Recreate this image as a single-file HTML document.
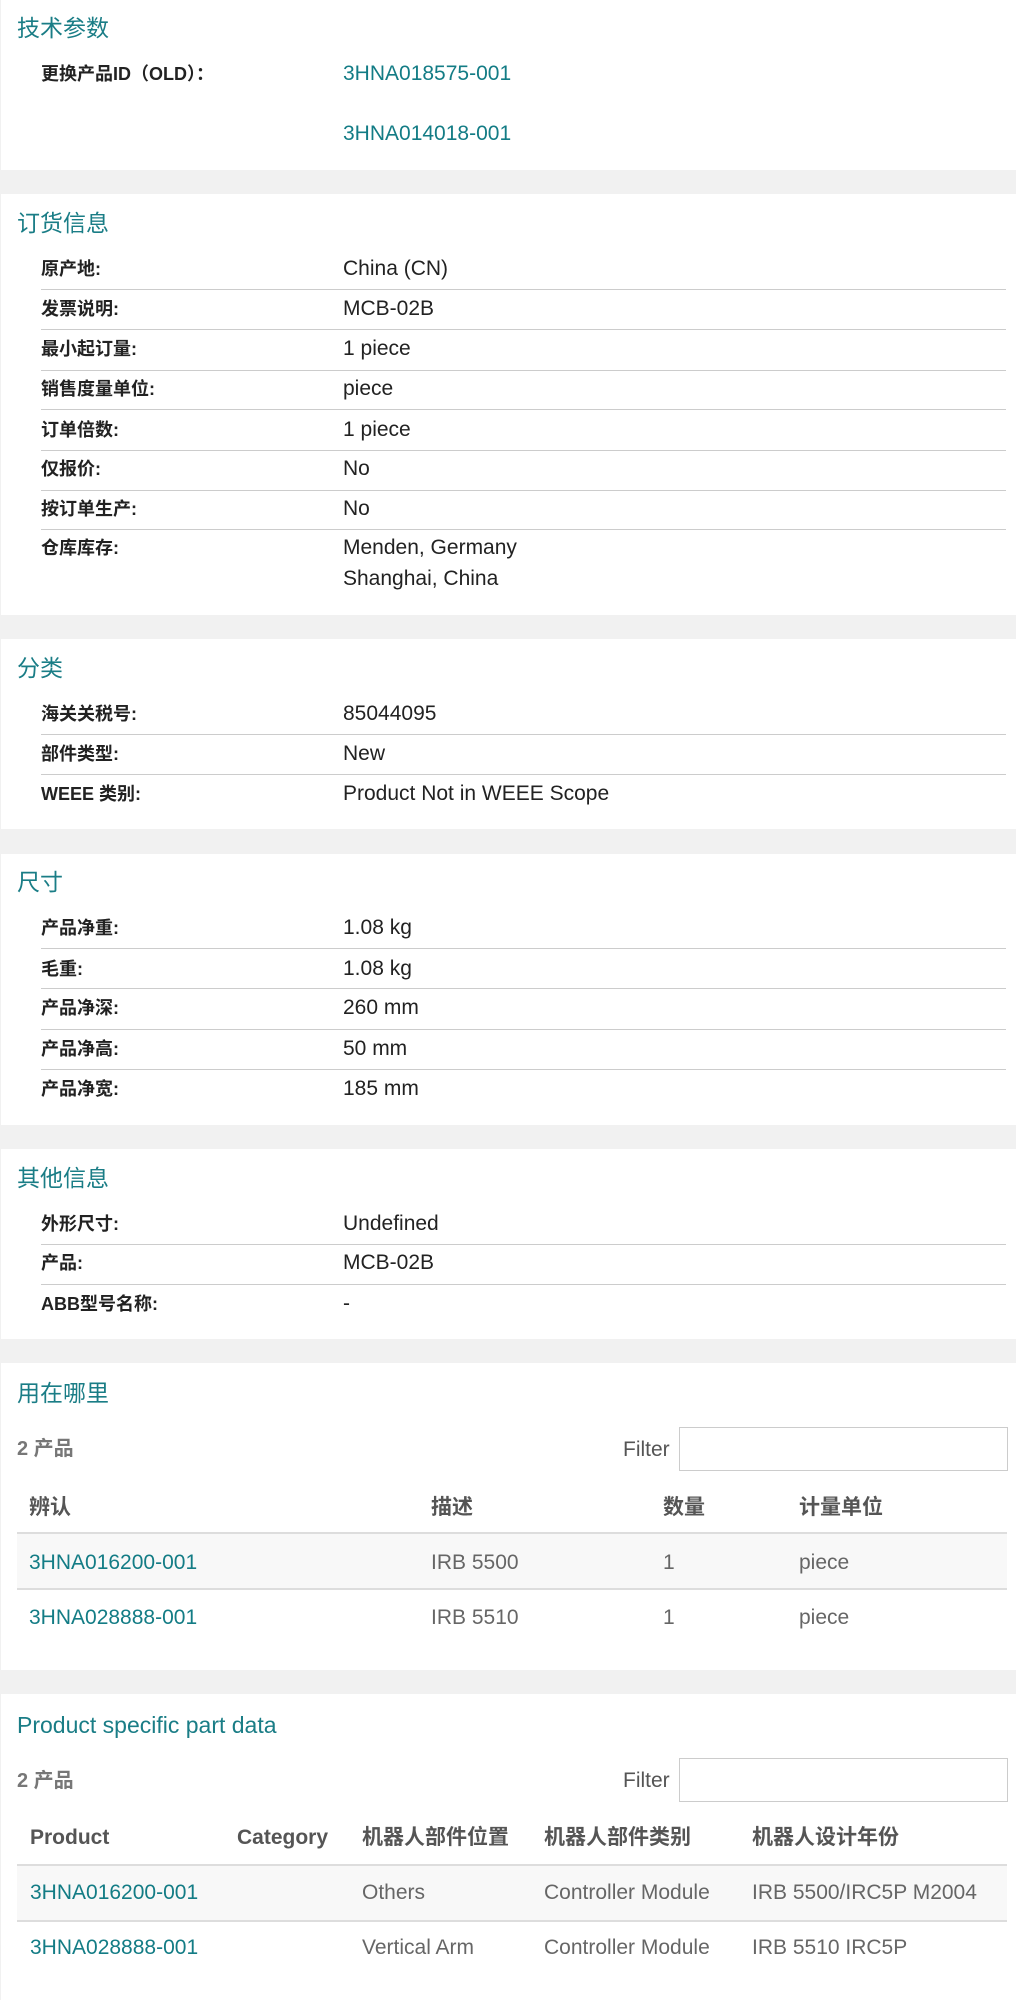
<!DOCTYPE html>
<html><head><meta charset="utf-8"><style>
*{margin:0;padding:0;box-sizing:border-box}
body{width:1016px;height:2000px;background:#f1f1f1;position:relative;overflow:hidden;font-family:"Liberation Sans","Noto Sans CJK SC",sans-serif}
.card{position:absolute;left:1px;right:0;background:#fff}
.t{position:absolute;left:16px;font-size:23px;color:#1a7d86;line-height:30px;white-space:nowrap}
.l{position:absolute;left:40px;font-size:18px;font-weight:bold;color:#222;line-height:24px;white-space:nowrap}
.v{position:absolute;left:342px;font-size:21px;color:#222;line-height:24px;white-space:nowrap}
.hr{position:absolute;left:40px;right:10px;height:1px;background:#ccc}
.c{position:absolute;font-size:21px;color:#666;line-height:24px;white-space:nowrap}
.h{position:absolute;font-size:21px;font-weight:bold;color:#555;line-height:24px;white-space:nowrap}
.a{color:#137c85}
.tl{position:absolute;left:16px;right:9px;height:2px;background:#ddd}
.bg{position:absolute;left:16px;right:9px;background:#f8f8f8}
.fb{position:absolute;left:678px;width:329px;height:44px;border:1px solid #ccc;background:#fff}
</style></head><body>
<div class="card" style="top:0;height:170px">
<div class="t" style="top:13px">技术参数</div>
<div class="l" style="top:62px">更换产品ID（OLD）：</div>
<div class="v a" style="top:62px">3HNA018575-001</div>
<div class="v a" style="top:122px">3HNA014018-001</div>
</div>
<div class="card" style="top:194px;height:421px">
<div class="t" style="top:14px">订货信息</div>
<div class="l" style="top:63px">原产地:</div><div class="v" style="top:63px">China (CN)</div>
<div class="hr" style="top:95px"></div>
<div class="l" style="top:103px">发票说明:</div><div class="v" style="top:103px">MCB-02B</div>
<div class="hr" style="top:135px"></div>
<div class="l" style="top:143px">最小起订量:</div><div class="v" style="top:143px">1 piece</div>
<div class="hr" style="top:176px"></div>
<div class="l" style="top:183px">销售度量单位:</div><div class="v" style="top:183px">piece</div>
<div class="hr" style="top:215px"></div>
<div class="l" style="top:224px">订单倍数:</div><div class="v" style="top:224px">1 piece</div>
<div class="hr" style="top:256px"></div>
<div class="l" style="top:263px">仅报价:</div><div class="v" style="top:263px">No</div>
<div class="hr" style="top:296px"></div>
<div class="l" style="top:303px">按订单生产:</div><div class="v" style="top:303px">No</div>
<div class="hr" style="top:335px"></div>
<div class="l" style="top:342px">仓库库存:</div><div class="v" style="top:342px">Menden, Germany</div>
<div class="v" style="top:373px">Shanghai, China</div>
</div>
<div class="card" style="top:639px;height:190px">
<div class="t" style="top:14px">分类</div>
<div class="l" style="top:63px">海关关税号:</div><div class="v" style="top:63px">85044095</div>
<div class="hr" style="top:95px"></div>
<div class="l" style="top:103px">部件类型:</div><div class="v" style="top:103px">New</div>
<div class="hr" style="top:135px"></div>
<div class="l" style="top:143px">WEEE 类别:</div><div class="v" style="top:143px">Product Not in WEEE Scope</div>
</div>
<div class="card" style="top:854px;height:271px">
<div class="t" style="top:13px">尺寸</div>
<div class="l" style="top:62px">产品净重:</div><div class="v" style="top:62px">1.08 kg</div>
<div class="hr" style="top:94px"></div>
<div class="l" style="top:103px">毛重:</div><div class="v" style="top:103px">1.08 kg</div>
<div class="hr" style="top:134px"></div>
<div class="l" style="top:142px">产品净深:</div><div class="v" style="top:142px">260 mm</div>
<div class="hr" style="top:175px"></div>
<div class="l" style="top:183px">产品净高:</div><div class="v" style="top:183px">50 mm</div>
<div class="hr" style="top:215px"></div>
<div class="l" style="top:223px">产品净宽:</div><div class="v" style="top:223px">185 mm</div>
</div>
<div class="card" style="top:1149px;height:190px">
<div class="t" style="top:14px">其他信息</div>
<div class="l" style="top:63px">外形尺寸:</div><div class="v" style="top:63px">Undefined</div>
<div class="hr" style="top:95px"></div>
<div class="l" style="top:102px">产品:</div><div class="v" style="top:102px">MCB-02B</div>
<div class="hr" style="top:135px"></div>
<div class="l" style="top:143px">ABB型号名称:</div><div class="v" style="top:143px">-</div>
</div>
<div class="card" style="top:1363px;height:307px">
<div class="t" style="top:15px">用在哪里</div>
<div class="h" style="top:74px;left:16px;color:#777;font-size:20px">2 产品</div>
<div class="c" style="top:75px;left:622px;color:#555">Filter</div>
<div class="fb" style="top:64px"></div>
<div class="h" style="top:133px;left:28px">辨认</div>
<div class="h" style="top:133px;left:430px">描述</div>
<div class="h" style="top:133px;left:662px">数量</div>
<div class="h" style="top:133px;left:798px">计量单位</div>
<div class="bg" style="top:170px;height:55px"></div>
<div class="tl" style="top:169px"></div>
<div class="tl" style="top:225px"></div>
<div class="c a" style="top:188px;left:28px">3HNA016200-001</div>
<div class="c" style="top:188px;left:430px">IRB 5500</div>
<div class="c" style="top:188px;left:662px">1</div>
<div class="c" style="top:188px;left:798px">piece</div>
<div class="c a" style="top:243px;left:28px">3HNA028888-001</div>
<div class="c" style="top:243px;left:430px">IRB 5510</div>
<div class="c" style="top:243px;left:662px">1</div>
<div class="c" style="top:243px;left:798px">piece</div>
</div>
<div class="card" style="top:1694px;height:306px">
<div class="t" style="top:16px">Product specific part data</div>
<div class="h" style="top:75px;left:16px;color:#777;font-size:20px">2 产品</div>
<div class="c" style="top:75px;left:622px;color:#555">Filter</div>
<div class="fb" style="top:64px"></div>
<div class="h" style="top:132px;left:29px">Product</div>
<div class="h" style="top:132px;left:236px">Category</div>
<div class="h" style="top:132px;left:361px">机器人部件位置</div>
<div class="h" style="top:132px;left:543px">机器人部件类别</div>
<div class="h" style="top:132px;left:751px">机器人设计年份</div>
<div class="bg" style="top:171px;height:55px"></div>
<div class="tl" style="top:170px"></div>
<div class="tl" style="top:226px"></div>
<div class="c a" style="top:187px;left:29px">3HNA016200-001</div>
<div class="c" style="top:187px;left:361px">Others</div>
<div class="c" style="top:187px;left:543px">Controller Module</div>
<div class="c" style="top:187px;left:751px">IRB 5500/IRC5P M2004</div>
<div class="c a" style="top:242px;left:29px">3HNA028888-001</div>
<div class="c" style="top:242px;left:361px">Vertical Arm</div>
<div class="c" style="top:242px;left:543px">Controller Module</div>
<div class="c" style="top:242px;left:751px">IRB 5510 IRC5P</div>
</div>
</body></html>
